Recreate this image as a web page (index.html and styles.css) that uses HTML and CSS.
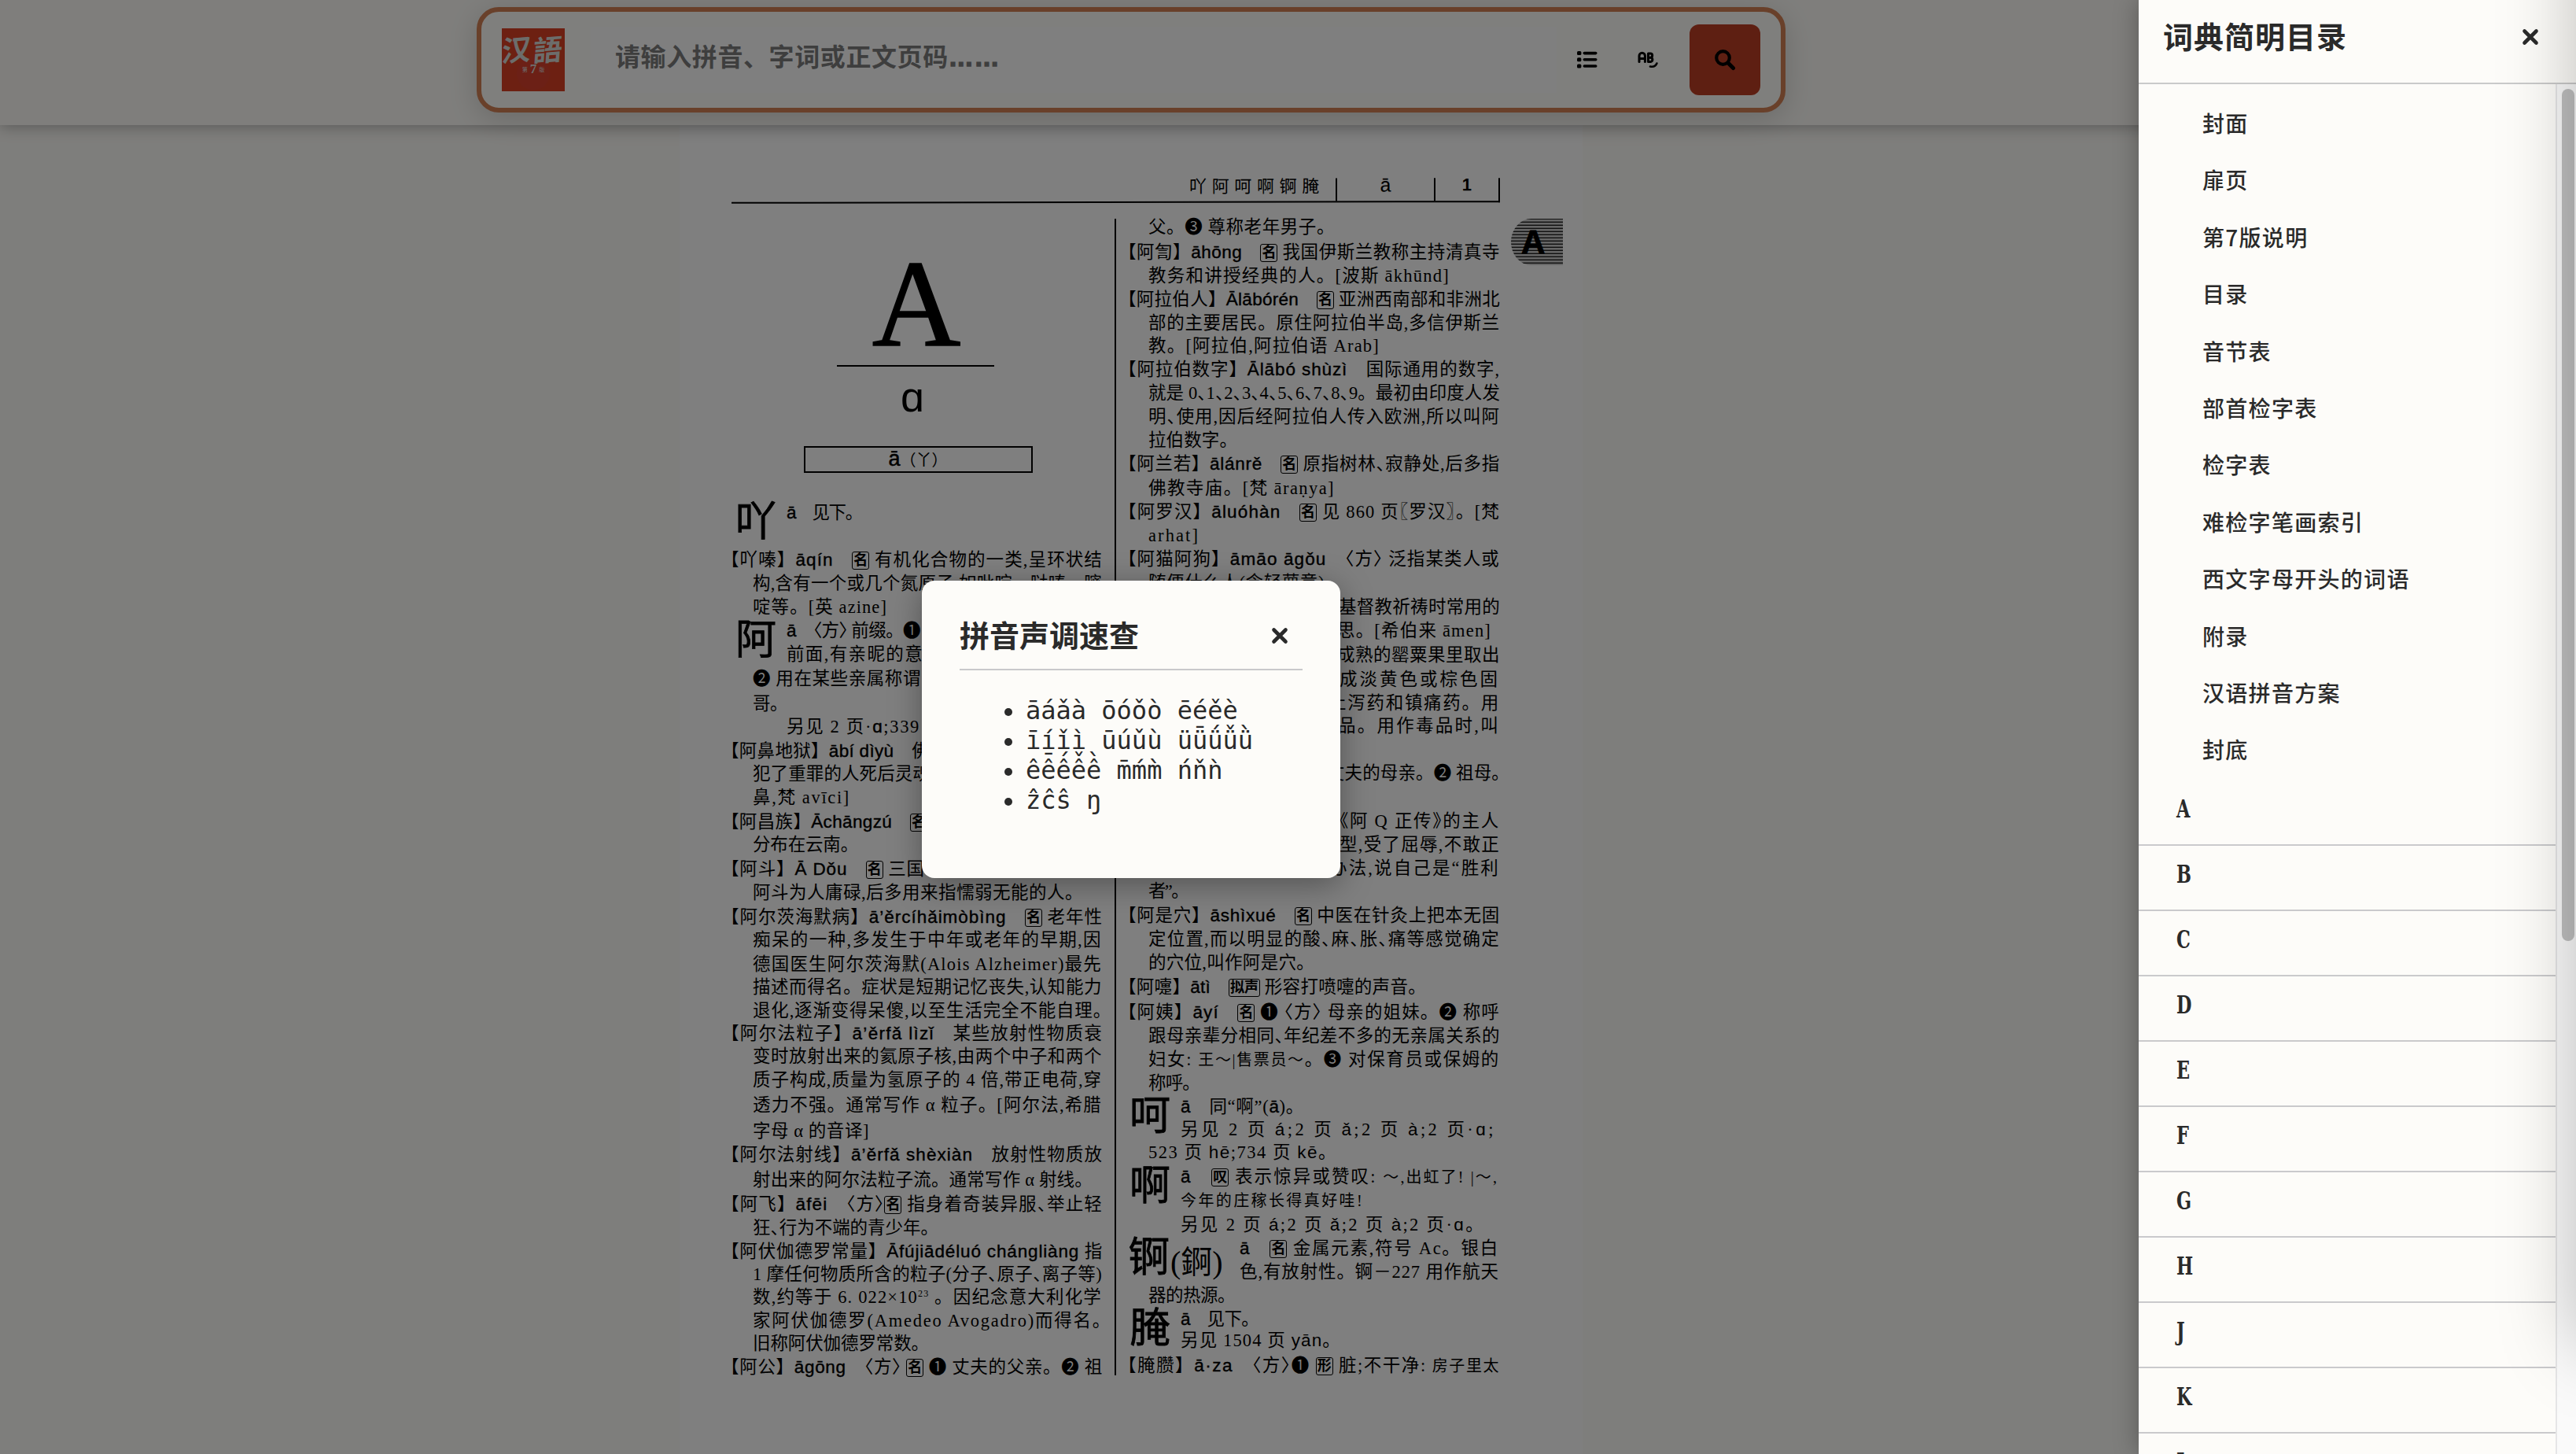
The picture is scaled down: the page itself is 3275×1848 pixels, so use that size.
FILE: index.html
```html
<!DOCTYPE html>
<html lang="zh-CN">
<head>
<meta charset="utf-8">
<title>汉语词典</title>
<link rel="stylesheet" href="styles.css">
</head>
<body>
<div class="app">
  <header class="topbar">
    <div class="search">
      <div class="logo"><div class="logo-name"><span>汉</span><span>語</span></div><div class="logo-ed">第<b>7</b>版</div></div>
      <div class="field">请输入拼音、字词或正文页码<span class="dots">……</span></div>
      <button class="tool"><svg width="26" height="24" viewBox="0 0 26 24"><g fill="#000"><rect x="0" y="1" width="5.4" height="5" rx="1.6"/><rect x="0" y="9.3" width="5.4" height="5" rx="1.6"/><rect x="0" y="17.6" width="5.4" height="5" rx="1.6"/><rect x="7.5" y="1.8" width="18" height="3.6" rx="1.8"/><rect x="7.5" y="10" width="18" height="3.6" rx="1.8"/><rect x="7.5" y="18.2" width="18" height="3.6" rx="1.8"/></g></svg></button>
      <button class="tool second"><svg width="26" height="22" viewBox="0 0 26 22"><g fill="none" stroke="#000" stroke-width="3" stroke-linecap="round" stroke-linejoin="round"><path d="M2 13.5V6a3.7 3.7 0 0 1 7.4 0v7.5M2 9.5h7.4"/><path d="M13.5 3v10.5h3.200a2.700 2.700 0 0 0 0-5.300h-3.200M13.500 3h2.600a2.600 2.600 0 0 1 0 5.200"/><path d="M16 19.500c4.500 1 7-.5 8.400-4" stroke-width="2.600"/></g></svg></button>
      <button class="go"><svg width="28" height="28" viewBox="0 0 28 28"><circle cx="11.500" cy="11.500" r="8.300" fill="none" stroke="#000" stroke-width="4.200"/><path d="M18 18l6.500 6.500" stroke="#000" stroke-width="5" stroke-linecap="round"/></svg></button>
    </div>
  </header>

  <main class="scan">
    <div class="running">
      <p class="ln chars" style="--w:172px">吖阿呵啊锕腌</p>
      <div class="cell py">ā</div>
      <div class="cell num">1</div>
    </div>
    <div class="columns">
      <section class="left">
        <div class="opener">
          <div class="cap">A</div>
          <div class="rule"></div>
          <div class="low">ɑ</div>
          <div class="syl"><span class="py">ā</span>（丫）</div>
        </div>
        <div class="lines">
          <div class="row h"><b class="head">吖</b><p class="ln" style="--w:96px"><i>ā</i>&emsp;见下。</p></div>
          <p class="ln e">【吖嗪】<i>āqín</i>&emsp;<u>名</u> 有机化合物的一类,呈环状结</p>
          <p class="ln f">构,含有一个或几个氮原子,如吡啶、哒嗪、嘧</p>
          <p class="ln f" style="--w:171px">啶等。[英 azine]</p>
          <div class="row h"><b class="head">阿</b><p class="ln" style="--w:170px"><i>ā</i>&emsp;<s>〈方〉</s>&nbsp;前缀。❶</p></div>
          <p class="ln h" style="--w:174px">前面,有亲昵的意</p>
          <p class="ln f" style="--w:214px">❷ 用在某些亲属称谓</p>
          <p class="ln f" style="--w:44px">哥。</p>
          <p class="ln h" style="--w:170px">另见 2 页·<i>ɑ</i>;339</p>
          <p class="ln e" style="--w:265px">【阿鼻地狱】<i>ābí dìyù</i>&emsp;佛</p>
          <p class="ln f" style="--w:226px">犯了重罪的人死后灵魂</p>
          <p class="ln f" style="--w:124px">鼻,梵 avīci]</p>
          <p class="ln e" style="--w:262px">【阿昌族】<i>Āchāngzú</i>&emsp;<u>名</u></p>
          <p class="ln f" style="--w:134px">分布在云南。</p>
          <p class="ln e" style="--w:259px">【阿斗】<i>Ā Dǒu</i>&emsp;<u>名</u> 三国</p>
          <p class="ln f" style="--w:420px">阿斗为人庸碌,后多用来指懦弱无能的人。</p>
          <p class="ln e">【阿尔茨海默病】<i>ā’ěrcíhǎimòbìng</i>&emsp;<u>名</u> 老年性</p>
          <p class="ln f">痴呆的一种,多发生于中年或老年的早期,因</p>
          <p class="ln f">德国医生阿尔茨海默(Alois Alzheimer)最先</p>
          <p class="ln f">描述而得名。症状是短期记忆丧失,认知能力</p>
          <p class="ln f" style="--w:456px">退化,逐渐变得呆傻,以至生活完全不能自理。</p>
          <p class="ln e">【阿尔法粒子】<i>ā’ěrfǎ lìzǐ</i>&emsp;某些放射性物质衰</p>
          <p class="ln f">变时放射出来的氦原子核,由两个中子和两个</p>
          <p class="ln f">质子构成,质量为氢原子的 4 倍,带正电荷,穿</p>
          <p class="ln f">透力不强。通常写作 α 粒子。[阿尔法,希腊</p>
          <p class="ln f" style="--w:148px">字母 α 的音译]</p>
          <p class="ln e">【阿尔法射线】<i>ā’ěrfǎ shèxiàn</i>&emsp;放射性物质放</p>
          <p class="ln f" style="--w:432px">射出来的阿尔法粒子流。通常写作 α 射线。</p>
          <p class="ln e">【阿飞】<i>āfēi</i>&emsp;<s>〈方〉</s><u>名</u> 指身着奇装异服<s>、</s>举止轻</p>
          <p class="ln f" style="--w:236px">狂<s>、</s>行为不端的青少年。</p>
          <p class="ln e">【阿伏伽德罗常量】<i>Āfújiādéluó chángliàng</i> 指</p>
          <p class="ln f">1 摩任何物质所含的粒子(分子<s>、</s>原子<s>、</s>离子等)</p>
          <p class="ln f">数,约等于 6. 022×10<sup>23</sup> 。因纪念意大利化学</p>
          <p class="ln f" style="--w:456px">家阿伏伽德罗(Amedeo Avogadro)而得名。</p>
          <p class="ln f" style="--w:224px">旧称阿伏伽德罗常数。</p>
          <p class="ln e">【阿公】<i>āgōng</i>&emsp;<s>〈方〉</s> <u>名</u> ❶ 丈夫的父亲。❷ 祖</p>
        </div>
      </section>
      <section class="right">
        <div class="lines">
          <p class="ln f" style="--w:237px">父。❸ 尊称老年男子。</p>
          <p class="ln e">【阿訇】<i>āhōng</i>&emsp;<u>名</u> 我国伊斯兰教称主持清真寺</p>
          <p class="ln f" style="--w:383px">教务和讲授经典的人。[波斯 ākhūnd]</p>
          <p class="ln e">【阿拉伯人】<i>Ālābórén</i>&emsp;<u>名</u> 亚洲西南部和非洲北</p>
          <p class="ln f">部的主要居民。原住阿拉伯半岛,多信伊斯兰</p>
          <p class="ln f" style="--w:294px">教。[阿拉伯,阿拉伯语 Arab]</p>
          <p class="ln e">【阿拉伯数字】<i>Ālābó shùzì</i>&emsp;国际通用的数字,</p>
          <p class="ln f">就是 <s>0、1、2、3、4、5、6、7、8、9</s>。最初由印度人发</p>
          <p class="ln f">明<s>、</s>使用,因后经阿拉伯人传入欧洲,所以叫阿</p>
          <p class="ln f" style="--w:113px">拉伯数字。</p>
          <p class="ln e">【阿兰若】<i>ālánrě</i>&emsp;<u>名</u> 原指树林<s>、</s>寂静处,后多指</p>
          <p class="ln f" style="--w:237px">佛教寺庙。[梵 āraṇya]</p>
          <p class="ln e">【阿罗汉】<i>āluóhàn</i>&emsp;<u>名</u> 见 860 页<s>〖罗汉〗</s>。[梵</p>
          <p class="ln f" style="--w:65px">arhat]</p>
          <p class="ln e">【阿猫阿狗】<i>āmāo āgǒu</i>&emsp;<s>〈方〉</s> 泛指某类人或</p>
          <p class="ln f" style="--w:224px">随便什么人(含轻蔑意)</p>
          <p class="ln r" style="--w:205px">基督教祈祷时常用的</p>
          <p class="ln r amen" style="--w:196px">思。[希伯来 āmen]</p>
          <p class="ln r" style="--w:207px">成熟的罂粟果里取出</p>
          <p class="ln r" style="--w:204px">成淡黄色或棕色固</p>
          <p class="ln r" style="--w:218px">止泻药和镇痛药。用</p>
          <p class="ln r" style="--w:206px">品。用作毒品时,叫</p>
          <p class="ln r mother" style="--w:232px">丈夫的母亲。❷ 祖母。</p>
          <p class="ln r" style="--w:204px"><s>《</s>阿 Q 正传<s>》</s>的主人</p>
          <p class="ln r" style="--w:204px">型,受了屈辱,不敢正</p>
          <p class="ln r" style="--w:217px">办法,说自己是“胜利</p>
          <p class="ln f" style="--w:50px">者”。</p>
          <p class="ln e">【阿是穴】<i>āshìxué</i>&emsp;<u>名</u> 中医在针灸上把本无固</p>
          <p class="ln f">定位置,而以明显的酸<s>、</s>麻<s>、</s>胀<s>、</s>痛等感觉确定</p>
          <p class="ln f" style="--w:211px">的穴位,叫作阿是穴。</p>
          <p class="ln e" style="--w:391px">【阿嚏】<i>ātì</i>&emsp;<u>拟声</u> 形容打喷嚏的声音。</p>
          <p class="ln e">【阿姨】<i>āyí</i>&emsp;<u>名</u> ❶ <s>〈方〉</s> 母亲的姐妹。❷ 称呼</p>
          <p class="ln f">跟母亲辈分相同<s>、</s>年纪差不多的无亲属关系的</p>
          <p class="ln f">妇女: <em>王～|售票员～</em>。❸ 对保育员或保姆的</p>
          <p class="ln f" style="--w:65px">称呼。</p>
          <div class="row h"><b class="head">呵</b><p class="ln" style="--w:157px"><i>ā</i>&emsp;同“啊”(<i>ā</i>)。</p></div>
          <p class="ln h thin" style="--w:401px">另见 2 页 <i>á</i>;2 页 <i>ǎ</i>;2 页 <i>à</i>;2 页·<i>ɑ</i>;</p>
          <p class="ln f thin" style="--w:240px">523 页 <i>hē</i>;734 页 <i>kē</i>。</p>
          <div class="row h"><b class="head">啊</b><p class="ln" style="--w:404px"><i>ā</i>&emsp;<u>叹</u> 表示惊异或赞叹: <em>～,出虹了! |～,</em></p></div>
          <p class="ln h" style="--w:233px"><em>今年的庄稼长得真好哇!</em></p>
          <p class="ln h thin" style="--w:387px">另见 2 页 <i>á</i>;2 页 <i>ǎ</i>;2 页 <i>à</i>;2 页·<i>ɑ</i>。</p>
          <div class="row hh"><b class="head">锕</b><span class="alt">(錒)</span><p class="ln" style="--w:330px"><i>ā</i>&emsp;<u>名</u> 金属元素,符号 Ac。银白</p></div>
          <p class="ln hh" style="--w:330px">色,有放射性。锕－227 用作航天</p>
          <p class="ln f" style="--w:110px">器的热源。</p>
          <div class="row h"><b class="head">腌</b><p class="ln" style="--w:99px"><i>ā</i>&emsp;见下。</p></div>
          <p class="ln h thin" style="--w:204px">另见 1504 页 <i>yān</i>。</p>
          <p class="ln e">【腌臜】<i>ā·za</i>&emsp;<s>〈方〉</s>❶ <u>形</u> 脏;不干净: <em>房子里太</em></p>
        </div>
      </section>
      <div class="thumb-tab">A</div>
    </div>
  </main>
</div>

<div class="backdrop"></div>

<section class="dialog">
  <div class="dialog-head"><h2>拼音声调速查</h2><button class="close"><svg width="22" height="22" viewBox="0 0 22 22"><path d="M3.500 3.500l15 15M18.500 3.500l-15 15" stroke="#2a2a2a" stroke-width="4.600" stroke-linecap="round"/></svg></button></div>
  <ul>
    <li>āáǎà ōóǒò ēéěè</li>
    <li>īíǐì ūúǔù üǖǘǚǜ</li>
    <li>ê<span class="st">ê<span>&nbsp;&#x304;</span></span><span class="st">ê<span>&nbsp;&#x301;</span></span><span class="st">ê<span>&nbsp;&#x30c;</span></span><span class="st">ê<span>&nbsp;&#x300;</span></span> m̄ḿm̀ ńňǹ</li>
    <li>ẑĉŝ ŋ</li>
  </ul>
</section>

<aside class="toc">
  <div class="toc-head"><h2>词典简明目录</h2><button class="close"><svg width="22" height="22" viewBox="0 0 22 22"><path d="M3.500 3.500l15 15M18.500 3.500l-15 15" stroke="#2a2a2a" stroke-width="4.600" stroke-linecap="round"/></svg></button></div>
  <div class="toc-body">
    <div class="toc-list">
      <ul class="front">
        <li>封面</li><li>扉页</li><li>第7版说明</li><li>目录</li><li>音节表</li><li>部首检字表</li><li>检字表</li><li>难检字笔画索引</li><li>西文字母开头的词语</li><li>附录</li><li>汉语拼音方案</li><li>封底</li>
      </ul>
      <ul class="letters">
        <li><span>A</span></li><li><span>B</span></li><li><span>C</span></li><li><span>D</span></li><li><span>E</span></li><li><span>F</span></li><li><span>G</span></li><li><span>H</span></li><li><span>J</span></li><li><span>K</span></li><li><span>L</span></li>
      </ul>
    </div>
    <div class="track"><div class="thumb"></div></div>
  </div>
  <div class="edge"></div>
</aside>
<script src="fit.js"></script>
</body>
</html>
```
FILE: fit.js
```js
// Spread every printed line to its set width by adjusting the letter spacing.
document.querySelectorAll('.ln').forEach(function (line) {
  var target = parseFloat(getComputedStyle(line).getPropertyValue('--w'));
  if (!target) return;
  line.style.letterSpacing = '0px';
  var base = line.getBoundingClientRect().width;
  line.style.letterSpacing = '1px';
  var perPixel = line.getBoundingClientRect().width - base;
  line.style.letterSpacing = (target - base) / perPixel + 'px';
});
```
FILE: styles.css
```css
* { box-sizing: border-box; }
html, body { margin: 0; height: 1848px; overflow: hidden; }
body { position: relative; background: #fdfcf8; font-family: "Liberation Serif", "Noto Sans CJK SC", serif; color: #2a2a2a; }
h2, ul, p { margin: 0; padding: 0; font-weight: normal; }
ul { list-style: none; }
button { border: 0; padding: 0; background: none; display: flex; align-items: center; justify-content: center; }
svg { display: block; }

.app { width: 2876px; height: 1848px; }
.topbar { position: relative; width: 3275px; height: 159px; padding: 9px 0 0 606px; background: #fefdf9; box-shadow: 0 2px 18px rgba(0,0,0,.3); z-index: 1; }
.search { display: flex; align-items: center; width: 1664px; height: 134px; padding: 0 26px; border: 6px solid #d28054; border-radius: 28px; background: #fffefa; box-shadow: 0 8px 36px rgba(0,0,0,.16); }
.logo { width: 80px; height: 80px; background: radial-gradient(circle at 50% 72%, #d8402c 0 20px, #da4024 22px); color: #fff; }
.logo-name { display: flex; justify-content: space-between; align-items: center; height: 50px; padding: 0 1px; font: 700 37px/46px "Noto Sans CJK SC", sans-serif; color: #d9dad6; }
.logo-name span { width: 40px; margin: 0 -1px; transform: skew(-4deg, -5deg); }
.logo-ed { display: flex; justify-content: center; align-items: center; gap: 3px; height: 4px; font-size: 7px; color: #ddd; }
.logo-ed b { font-size: 17px; }
.field { width: 1228px; height: 84px; margin-left: 33px; padding-left: 31px; background: #fff; color: #7c7c7c; font: 700 32px/72px "Noto Sans CJK SC", sans-serif; letter-spacing: .6px; }
.dots { font: 700 32px/40px "Liberation Sans", sans-serif; -webkit-text-stroke: 1.5px #7c7c7c; }
.tool { width: 77px; height: 60px; }
.go { width: 90px; height: 90px; margin-left: 15px; border-radius: 12px; background: #bd3f25; }

.scan { width: 1148px; height: 1689px; margin-left: 864px; padding: 68px 0 0 66px; background: #fff; color: #000; }
.running { display: flex; width: 977px; height: 31px; padding-left: 582px; border-bottom: 2px solid #000; border-right: 2px solid #000; transform: rotate(-.1deg); }
.chars { margin-top: -8px; font-size: 22px; }
.cell { border-left: 2px solid #000; height: 29px; text-align: center; line-height: 17px; font-size: 25px; }
.cell.py { width: 125px; margin-left: 14px; }
.cell.num { flex: 1; font-weight: 700; font-family: "Liberation Sans", sans-serif; font-size: 22px; }
.py, i { font-family: "Liberation Sans", sans-serif; font-style: normal; }
i { -webkit-text-stroke: .4px #000; }
.thin i { -webkit-text-stroke: 0; }
s { text-decoration: none; font-feature-settings: "halt"; }
.columns { display: flex; align-items: flex-start; margin-top: 16px; }
.left { width: 487px; }
.right { width: 491px; border-left: 2px solid #000; height: 1470px; margin-top: 4px; padding-left: 16px; }
.right .lines { margin-top: -4px; }
.opener { display: flex; flex-direction: column; align-items: center; height: 363px; padding-top: 58px; }
.cap { height: 132px; font-size: 156px; line-height: 110px; margin-left: -17px; -webkit-text-stroke: 1.5px #000; }
.rule { width: 200px; height: 2px; margin-left: -19px; background: #000; }
.low { height: 101px; margin-left: -27px; font: 54px/77px "Liberation Sans", sans-serif; }
.syl { width: 291px; height: 34px; margin-left: -13px; border: 2px solid #000; text-align: center; font-size: 20px; line-height: 28px; }
.syl .py { font-size: 27px; -webkit-text-stroke: .5px #000; }

.lines { display: grid; align-content: start; font-size: 22.5px; line-height: 30px; }
.left .lines { grid-template-rows: 60px 30px 30px 30px 30px 31px 32px 29px 31px 29px 30px 31px 29px 31px 30px 31px 29px 31px 29px 30px 29px 29px 30px 32px 33px 30px 32px 31px 30px 30px 29px 29px 30px 29px 30px 30px; }
.right .lines { grid-template-rows: 32px 30px 30px 30px 29px 30px 30px 30px 30px 30px 31px 30px 30px 30px 30px 31px 30px 31px 31px 30px 29px 60px 61px 30px 30px 29px 31px 30px 30px 31px 32px 30px 30px 30px 30px 29px 29px 31px 30px 31px 30px 30px 30px 30px 27px 32px 30px; }
.ln { width: max-content; height: 30px; white-space: pre; }
.f { margin-left: 27px; --w: 444px; }
.e { margin-left: -13px; --w: 485px; }
.right .f { margin-left: 25px; --w: 447px; }
.h { margin-left: 70px; }
.right .h { margin-left: 66px; }
.right .hh { margin-left: 141px; }
.right .r { margin-left: auto; margin-right: 1px; }
.right .amen { margin-right: 12px; }
.right .mother { margin-right: -11px; }
.row { position: relative; height: 30px; }
.head { position: absolute; left: -65px; top: -11px; font-size: 52px; line-height: 76px; font-weight: 400; -webkit-text-stroke: .8px #000; }
.right .hh .head { left: -141px; }
.alt { position: absolute; left: -88px; top: 8px; font-size: 40px; line-height: 50px; }
u { display: inline-block; height: 23px; padding: 0 1px; border: 1px solid #000; border-radius: 3px; font-size: 18px; line-height: 20px; font-weight: 700; text-decoration: none; letter-spacing: 0; vertical-align: 1px; }
em { font-style: normal; font-size: 20px; }
sup { font-size: 12px; line-height: 0; }
.thumb-tab { width: 66px; height: 59px; margin: 4px 0 0 13px; padding-left: 13px; border-radius: 26px 0 0 26px / 30px 0 0 30px; background: repeating-linear-gradient(#222 0 1px, #ccc 1px 3px, #888 3px 4px); font: 700 42px/60px "Liberation Sans", sans-serif; -webkit-text-stroke: 1px #000; }

.backdrop { position: absolute; inset: 0; background: rgba(0,0,0,.5); z-index: 2; }

.dialog { position: absolute; left: 1172px; top: 738px; width: 532px; height: 378px; padding: 32px 48px; border-radius: 16px; background: #fdfcf9; box-shadow: 0 8px 40px rgba(0,0,0,.35); z-index: 3; }
.dialog-head { display: flex; align-items: center; justify-content: space-between; height: 82px; padding: 0 18px 4px 0; border-bottom: 2px solid #c9c9cb; }
h2 { font: 700 38px/72px "Noto Sans CJK SC", sans-serif; }
.dialog-head h2 { margin-top: -4px; }
.dialog ul { margin: 32px 0 0 84px; font: 32px/38px "DejaVu Sans Mono", monospace; }
.dialog li { position: relative; white-space: pre; height: 38px; }
.dialog li::before { content: ""; position: absolute; left: -27px; top: 16px; width: 10px; height: 10px; border-radius: 50%; background: #2a2a2a; }
.st { position: relative; }
.st span { position: absolute; left: -19px; top: -9px; }

.toc { position: absolute; left: 2719px; top: 0; width: 556px; height: 1848px; overflow: visible; background: #fdfcf9; box-shadow: 0 0 30px rgba(0,0,0,.3); z-index: 4; }
.toc-head { display: flex; justify-content: space-between; align-items: center; height: 107px; padding: 0 47px 11px 31px; border-bottom: 2px solid #cacaca; }
.toc-head h2 { letter-spacing: 1px; margin-top: -4px; }
.toc-body { display: flex; height: 1741px; overflow: hidden; }
.toc-list { flex: 1; padding-top: 14px; }
.front { height: 871px; padding-left: 81px; font: 500 28px/70px "Noto Sans CJK SC", sans-serif; letter-spacing: 1.300px; }
.front li { height: 72.400px; }
.letters li { height: 83px; padding-left: 48px; border-bottom: 2px solid #cacacc; font: 700 32px/72px "DejaVu Serif", serif; }
.letters span { display: inline-block; transform: scaleX(.7); transform-origin: 0 50%; }
.track { width: 26px; padding: 6px 2px 0 6px; border-left: 2px solid #e6e6e6; background: #fafafa; }
.thumb { width: 16px; height: 1083px; border-radius: 8px; background: #bfbfbf; }
.edge { position: absolute; inset: 0; overflow: hidden; pointer-events: none; }
.edge::after { content: ""; position: absolute; left: 556px; top: -200px; width: 300px; height: 1910px; box-shadow: 0 0 90px rgba(0,0,0,.25); }
```
